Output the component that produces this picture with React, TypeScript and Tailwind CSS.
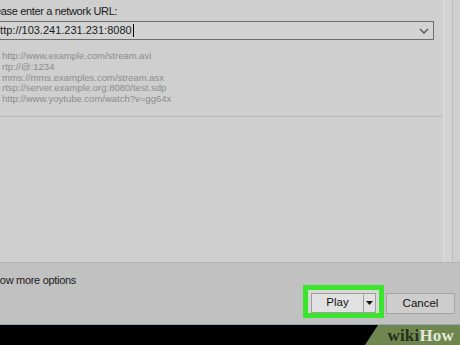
import React from "react"

const examples = [
	"http://www.example.com/stream.avi",
	"rtp://@:1234",
	"mms://mms.examples.com/stream.asx",
	"rtsp://server.example.org:8080/test.sdp",
	"http://www.yoytube.com/watch?v=gg64x",
]

const ChevronDown = () => (
	<svg width="10" height="6" viewBox="0 0 10 6" className="text-[#555]">
		<path d="M1 1 L5 5 L9 1" fill="none" stroke="currentColor" strokeWidth="1.4" />
	</svg>
)

const App = () => {
	return (
		<div
			className="w-[460px] h-[345px] overflow-hidden flex flex-col bg-[#c1c1c1] text-[#1a1a1a]"
			style={{ fontFamily: '"Liberation Sans", Arial, sans-serif' }}
		>
			{/* network tab panel */}
			<div className="h-[263px] shrink-0 flex border-b border-[#b3b3b3] bg-[#cfcfcf]">
				<div className="w-[444px] shrink-0 border-r border-[#dedede] flex flex-col">
					<p className="ml-[-14px] mt-[4px] text-[11px] tracking-[-0.35px] leading-[14px] h-[17px]">
						Please enter a network URL:
					</p>
					<div className="ml-[-11px] w-[445px] h-[19px] flex items-center justify-between border border-[#6e6e6e] bg-[#d3d3d3] pl-[4px] pr-[4px]">
						<span className="text-[11px] leading-[15px] flex items-center">
							http://103.241.231.231:8080
							<span className="inline-block w-px h-[13px] bg-black ml-px" />
						</span>
						<ChevronDown />
					</div>
					<div className="ml-[2px] mt-[11px] flex flex-col text-[9.5px] leading-[10.8px] text-[#8c8c8c]">
						{examples.map((e) => (
							<span key={e}>{e}</span>
						))}
					</div>
					<div className="mt-[11px] h-px w-full bg-[#b9b9b9]" />
				</div>
				<div className="w-[9px] shrink-0 border-r border-[#bdbdbd] bg-[#d3d3d3]" />
			</div>

			{/* options + buttons */}
			<div className="h-[61px] shrink-0 flex flex-col">
				<p className="ml-[-13px] mt-[10px] text-[11px] tracking-[-0.3px] leading-[14px]">Show more options</p>
				<div className="flex justify-end items-start gap-[2px] pr-[5px] -mt-[2px]">
					<div className="border-[5px] border-[#39e52d] px-[3px] pt-[3px] pb-0 bg-[#d8d8d8] flex">
						<div className="flex h-[20px] border border-[#9e9e9e] bg-[#e1e1e1]">
							<button className="w-[52px] text-[11.5px] text-[#111] border-r border-[#9e9e9e]">Play</button>
							<div className="w-[11px] flex items-center justify-center">
								<svg width="7" height="4" viewBox="0 0 7 4">
									<path d="M0 0 L7 0 L3.5 4 Z" fill="#111" />
								</svg>
							</div>
						</div>
					</div>
					<button className="mt-[8px] w-[69px] h-[21px] border border-[#a4a4a4] bg-[#cdcdcd] text-[11.5px] text-[#111]">
						Cancel
					</button>
				</div>
			</div>

			{/* taskbar */}
			<div className="flex-1 relative bg-black border-t border-[#8fa6bb]">
				<div
					className="absolute right-0 bottom-0 h-[20px] w-[95px] bg-[#6f874f] flex items-center justify-end pr-[6px]"
					style={{ clipPath: "polygon(13px 0, 100% 0, 100% 100%, 0 100%)" }}
				>
					<span
						className="text-[17px] font-bold leading-none tracking-[0.2px]"
						style={{ fontFamily: '"Liberation Serif", "Times New Roman", serif' }}
					>
						<span className="text-[#26301a]">wiki</span>
						<span className="text-[#e3e8d8]">How</span>
					</span>
				</div>
			</div>
		</div>
	)
}

export default App
